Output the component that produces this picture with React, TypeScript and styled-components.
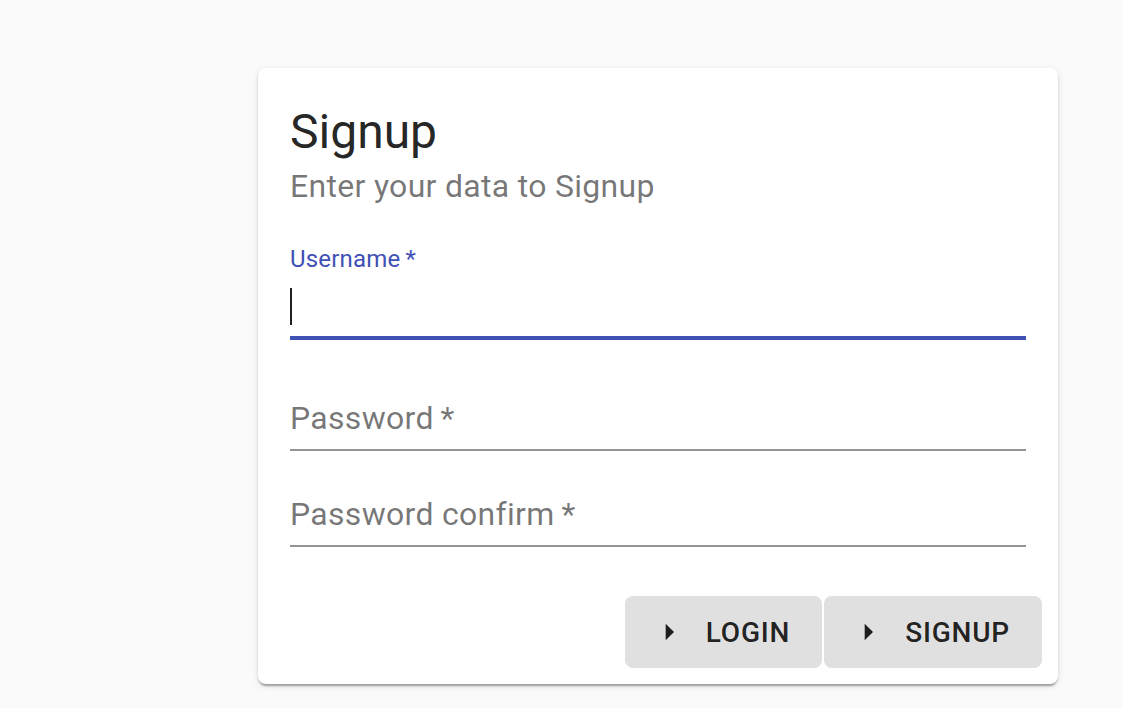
import React from 'react'
import styled, { createGlobalStyle } from 'styled-components'

const GlobalStyle = createGlobalStyle`
  html, body {
    margin: 0;
    padding: 0;
    background: #fafafa;
    font-family: Roboto, "Liberation Sans", Arial, sans-serif;
  }
`

const Page = styled.div`
  box-sizing: border-box;
  min-height: 708px;
  padding: 68px 0 0 258px;
`

const Card = styled.div`
  width: 800px;
  background: #ffffff;
  border-radius: 8px;
  box-shadow: 0 4px 2px -2px rgba(0, 0, 0, 0.2), 0 2px 2px 0 rgba(0, 0, 0, 0.14),
    0 2px 6px 0 rgba(0, 0, 0, 0.12);
  overflow: hidden;
`

const Content = styled.div`
  display: flex;
  flex-direction: column;
  padding: 32px 32px 33px;
`

const Title = styled.h2`
  margin: 0;
  font-size: 48px;
  font-weight: 400;
  line-height: 64px;
  color: rgba(0, 0, 0, 0.87);
`

const Subtitle = styled.p`
  margin: 0;
  font-size: 32px;
  line-height: 44px;
  letter-spacing: 0.3px;
  color: rgba(0, 0, 0, 0.54);
`

const Field = styled.div<{ $gap: number }>`
  display: flex;
  flex-direction: column;
  margin-top: ${p => p.$gap}px;
  height: 96px;
`

const Label = styled.label<{ $focused?: boolean }>`
  height: 32px;
  padding-top: 3px;
  box-sizing: border-box;
  font-size: 24px;
  line-height: 24px;
  letter-spacing: 0.2px;
  color: ${p => (p.$focused ? '#3f51b5' : 'rgba(0, 0, 0, 0.54)')};
`

const InputRow = styled.div<{ $focused?: boolean }>`
  box-sizing: border-box;
  display: flex;
  align-items: flex-start;
  height: 64px;
  padding-top: 12px;
  border-bottom: ${p => (p.$focused ? '4px solid #3f51b5' : '2px solid rgba(0, 0, 0, 0.42)')};
`

const Caret = styled.span`
  width: 2px;
  height: 37px;
  background: rgba(0, 0, 0, 0.87);
  flex: none;
`

const Input = styled.input`
  flex: 1;
  min-width: 0;
  height: 38px;
  padding: 0;
  border: none;
  outline: none;
  background: transparent;
  font-family: inherit;
  font-size: 32px;
  letter-spacing: 0.3px;
  color: rgba(0, 0, 0, 0.87);

  &::placeholder {
    color: rgba(0, 0, 0, 0.54);
    opacity: 1;
  }
`

const Actions = styled.div`
  display: flex;
  justify-content: flex-end;
  gap: 2px;
  padding: 16px;
`

const Button = styled.button`
  display: inline-flex;
  align-items: center;
  height: 72px;
  padding: 0 32px 0 24px;
  border: none;
  border-radius: 8px;
  background: #e0e0e0;
  font-family: inherit;
  font-size: 28px;
  font-weight: 500;
  letter-spacing: 0.8px;
  text-transform: uppercase;
  color: rgba(0, 0, 0, 0.87);
  cursor: pointer;

  svg {
    width: 40px;
    height: 40px;
    margin-right: 17px;
    fill: currentColor;
  }
`

function ArrowRight() {
  return (
    <svg viewBox="0 0 24 24" aria-hidden="true">
      <path d="M10 17l5-5-5-5v10z" />
    </svg>
  )
}

export default function App() {
  return (
    <>
      <GlobalStyle />
      <Page>
        <Card>
          <Content>
            <Title>Signup</Title>
            <Subtitle>Enter your data to Signup</Subtitle>

            <Field $gap={36}>
              <Label $focused>Username&thinsp;*</Label>
              <InputRow $focused>
                <Caret />
                <Input type="text" />
              </InputRow>
            </Field>

            <Field $gap={15}>
              <Label />
              <InputRow>
                <Input type="password" placeholder={'Password\u2009*'} />
              </InputRow>
            </Field>

            <Field $gap={0}>
              <Label />
              <InputRow>
                <Input type="password" placeholder={'Password confirm\u2009*'} />
              </InputRow>
            </Field>
          </Content>

          <Actions>
            <Button>
              <ArrowRight />
              Login
            </Button>
            <Button>
              <ArrowRight />
              Signup
            </Button>
          </Actions>
        </Card>
      </Page>
    </>
  )
}
